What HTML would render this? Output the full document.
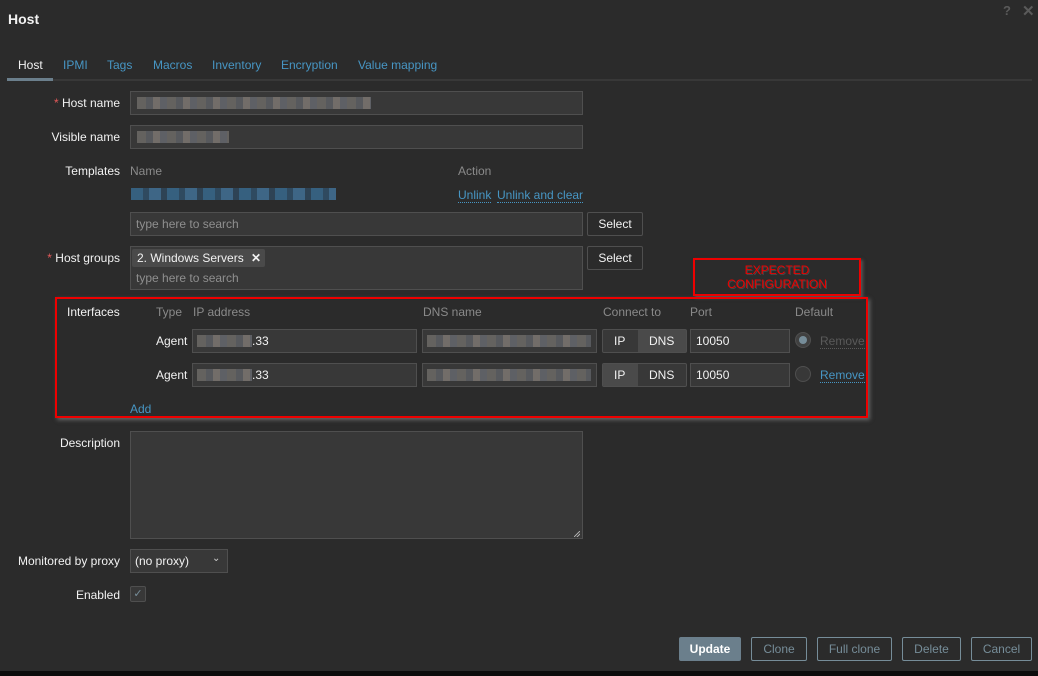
<!DOCTYPE html>
<html><head><meta charset="utf-8"><style>
*{box-sizing:border-box;margin:0;padding:0}
body{width:1038px;height:676px;background:#2b2b2b;font-family:"Liberation Sans",Arial,sans-serif;font-size:12px;color:#f2f2f2;position:relative;overflow:hidden}
.a{position:absolute}
.lbl{position:absolute;right:918px;text-align:right;white-space:nowrap;color:#f2f2f2}
.req{color:#e45959}
.inp{position:absolute;background:#383838;border:1px solid #4f4f4f;height:24px}
.btn{position:absolute;border:1px solid #768d99;color:#768d99;height:24px;line-height:22px;text-align:center;border-radius:2px;font-size:12px}
.hd{color:#8a8a8a}
.blue{color:#4796c4}
.ph{color:#8f8f8f}
.blur{position:absolute;height:12px;background:repeating-linear-gradient(90deg,#6f6c69 0 9px,#5f6166 9px 16px,#807a75 16px 23px,#676a70 23px 30px);opacity:.8}
.bblur{position:absolute;height:12px;background:repeating-linear-gradient(90deg,#36607f 0 12px,#2f4a60 12px 18px,#3e6686 18px 30px,#2e4355 30px 36px)}
.dot{border-bottom:1px dotted #4796c4}
</style></head><body>
<div class="a" style="left:8px;top:11px;font-size:14px;font-weight:bold;color:#f2f2f2">Host</div>
<div class="a" style="left:1003px;top:3px;font-size:13px;font-weight:bold;color:#5a5a5a">?</div>
<div class="a" style="left:1022px;top:2px;font-size:15px;font-weight:bold;color:#5a5a5a">✕</div>

<div class="a" style="left:8px;top:79px;width:1024px;height:2px;background:#383838"></div>
<div class="a" style="left:7px;top:78px;width:46px;height:3px;background:#6b7f8c"></div>
<div class="a" style="left:18px;top:58px;color:#f2f2f2">Host</div>
<div class="a blue" style="left:63px;top:58px">IPMI</div>
<div class="a blue" style="left:107px;top:58px">Tags</div>
<div class="a blue" style="left:153px;top:58px">Macros</div>
<div class="a blue" style="left:212px;top:58px">Inventory</div>
<div class="a blue" style="left:281px;top:58px">Encryption</div>
<div class="a blue" style="left:358px;top:58px">Value mapping</div>

<div class="lbl" style="top:96px"><span class="req">* </span>Host name</div>
<div class="inp" style="left:130px;top:91px;width:453px"></div>
<div class="blur" style="left:137px;top:97px;width:234px"></div>
<div class="lbl" style="top:130px">Visible name</div>
<div class="inp" style="left:130px;top:125px;width:453px"></div>
<div class="blur" style="left:137px;top:131px;width:92px"></div>

<div class="lbl" style="top:164px">Templates</div>
<div class="a hd" style="left:130px;top:164px">Name</div>
<div class="a hd" style="left:458px;top:164px">Action</div>
<div class="bblur" style="left:131px;top:188px;width:205px"></div>
<div class="a blue" style="left:458px;top:188px"><span class="dot">Unlink</span></div>
<div class="a blue" style="left:497px;top:188px"><span class="dot">Unlink and clear</span></div>
<div class="inp" style="left:130px;top:212px;width:453px"></div>
<div class="a ph" style="left:136px;top:217px">type here to search</div>
<div class="btn" style="left:587px;top:212px;width:56px;color:#f2f2f2;border-color:#4f4f4f;background:#2b2b2b">Select</div>

<div class="lbl" style="top:251px"><span class="req">* </span>Host groups</div>
<div class="inp" style="left:130px;top:246px;width:453px;height:44px"></div>
<div class="a" style="left:132px;top:249px;width:133px;height:18px;background:#4a4a4a;border-radius:2px"></div>
<div class="a" style="left:137px;top:251px">2. Windows Servers <b style="margin-left:4px">✕</b></div>
<div class="a ph" style="left:136px;top:271px">type here to search</div>
<div class="btn" style="left:587px;top:246px;width:56px;color:#f2f2f2;border-color:#4f4f4f;background:#2b2b2b">Select</div>

<div class="a" style="left:693px;top:258px;width:168px;height:38px;border:2px solid #e00;box-shadow:2px 2px 3px #555;text-align:center;color:#e00;font-size:12px;line-height:14px;padding-top:3px;text-shadow:1px 1px 0 rgba(90,90,90,.6)">EXPECTED<br>CONFIGURATION</div>
<div class="a" style="left:55px;top:297px;width:813px;height:121px;border:2px solid #e00;box-shadow:2px 2px 4px #666"></div>

<div class="a" style="left:67px;top:305px">Interfaces</div>
<div class="a hd" style="left:156px;top:305px">Type</div>
<div class="a hd" style="left:193px;top:305px">IP address</div>
<div class="a hd" style="left:423px;top:305px">DNS name</div>
<div class="a hd" style="left:603px;top:305px">Connect to</div>
<div class="a hd" style="left:690px;top:305px">Port</div>
<div class="a hd" style="left:795px;top:305px">Default</div>

<div class="a" style="left:156px;top:334px">Agent</div>
<div class="inp" style="left:192px;top:329px;width:225px"></div>
<div class="blur" style="left:197px;top:335px;width:55px"></div>
<div class="a" style="left:252px;top:334px">.33</div>
<div class="inp" style="left:422px;top:329px;width:175px"></div>
<div class="blur" style="left:427px;top:335px;width:164px"></div>
<div class="a" style="left:602px;top:329px;width:85px;height:24px;border:1px solid #4f4f4f;border-radius:2px;background:#4a4a4a;overflow:hidden"><div style="position:absolute;left:0;top:0;width:35px;height:22px;background:#383838"></div></div>
<div class="a" style="left:614px;top:334px">IP</div>
<div class="a" style="left:649px;top:334px">DNS</div>
<div class="inp" style="left:690px;top:329px;width:100px"></div>
<div class="a" style="left:696px;top:334px">10050</div>
<div class="a" style="left:795px;top:332px;width:16px;height:16px;border-radius:50%;background:#404040;border:1px solid #4f4f4f"></div>
<div class="a" style="left:799px;top:336px;width:8px;height:8px;border-radius:50%;background:#768d99"></div>
<div class="a" style="left:820px;top:334px;color:#5a5a5a;border-bottom:1px dotted #5a5a5a">Remove</div>

<div class="a" style="left:156px;top:368px">Agent</div>
<div class="inp" style="left:192px;top:363px;width:225px"></div>
<div class="blur" style="left:197px;top:369px;width:55px"></div>
<div class="a" style="left:252px;top:368px">.33</div>
<div class="inp" style="left:422px;top:363px;width:175px"></div>
<div class="blur" style="left:427px;top:369px;width:164px"></div>
<div class="a" style="left:602px;top:363px;width:85px;height:24px;border:1px solid #4f4f4f;border-radius:2px;background:#383838;overflow:hidden"><div style="position:absolute;left:0;top:0;width:35px;height:22px;background:#4a4a4a"></div></div>
<div class="a" style="left:614px;top:368px">IP</div>
<div class="a" style="left:649px;top:368px">DNS</div>
<div class="inp" style="left:690px;top:363px;width:100px"></div>
<div class="a" style="left:696px;top:368px">10050</div>
<div class="a" style="left:795px;top:366px;width:16px;height:16px;border-radius:50%;background:#383838;border:1px solid #4f4f4f"></div>
<div class="a blue" style="left:820px;top:368px"><span class="dot">Remove</span></div>
<div class="a blue" style="left:130px;top:402px">Add</div>

<div class="lbl" style="top:436px">Description</div>
<div class="inp" style="left:130px;top:431px;width:453px;height:108px"></div>
<div class="a" style="left:574px;top:531px;width:6px;height:6px;background:linear-gradient(135deg,transparent 45%,#aaa 45% 55%,transparent 55% 70%,#aaa 70% 80%,transparent 80%)"></div>

<div class="lbl" style="top:554px">Monitored by proxy</div>
<div class="inp" style="left:130px;top:549px;width:98px"></div>
<div class="a" style="left:135px;top:554px">(no proxy)</div>
<div class="a" style="left:212px;top:553px;font-size:10px;color:#ccc">&#8964;</div>

<div class="lbl" style="top:588px">Enabled</div>
<div class="a" style="left:130px;top:586px;width:16px;height:16px;border:1px solid #4f4f4f;background:#383838;border-radius:2px;color:#768d99;font-size:11px;text-align:center;line-height:14px">✓</div>

<div class="btn" style="left:679px;top:637px;width:62px;background:#6b7f8c;color:#fff;border-color:#6b7f8c;font-weight:bold">Update</div>
<div class="btn" style="left:751px;top:637px;width:56px">Clone</div>
<div class="btn" style="left:817px;top:637px;width:75px">Full clone</div>
<div class="btn" style="left:902px;top:637px;width:59px">Delete</div>
<div class="btn" style="left:971px;top:637px;width:61px">Cancel</div>
<div class="a" style="left:0;top:671px;width:1038px;height:5px;background:#0c0c0c"></div>
</body></html>
